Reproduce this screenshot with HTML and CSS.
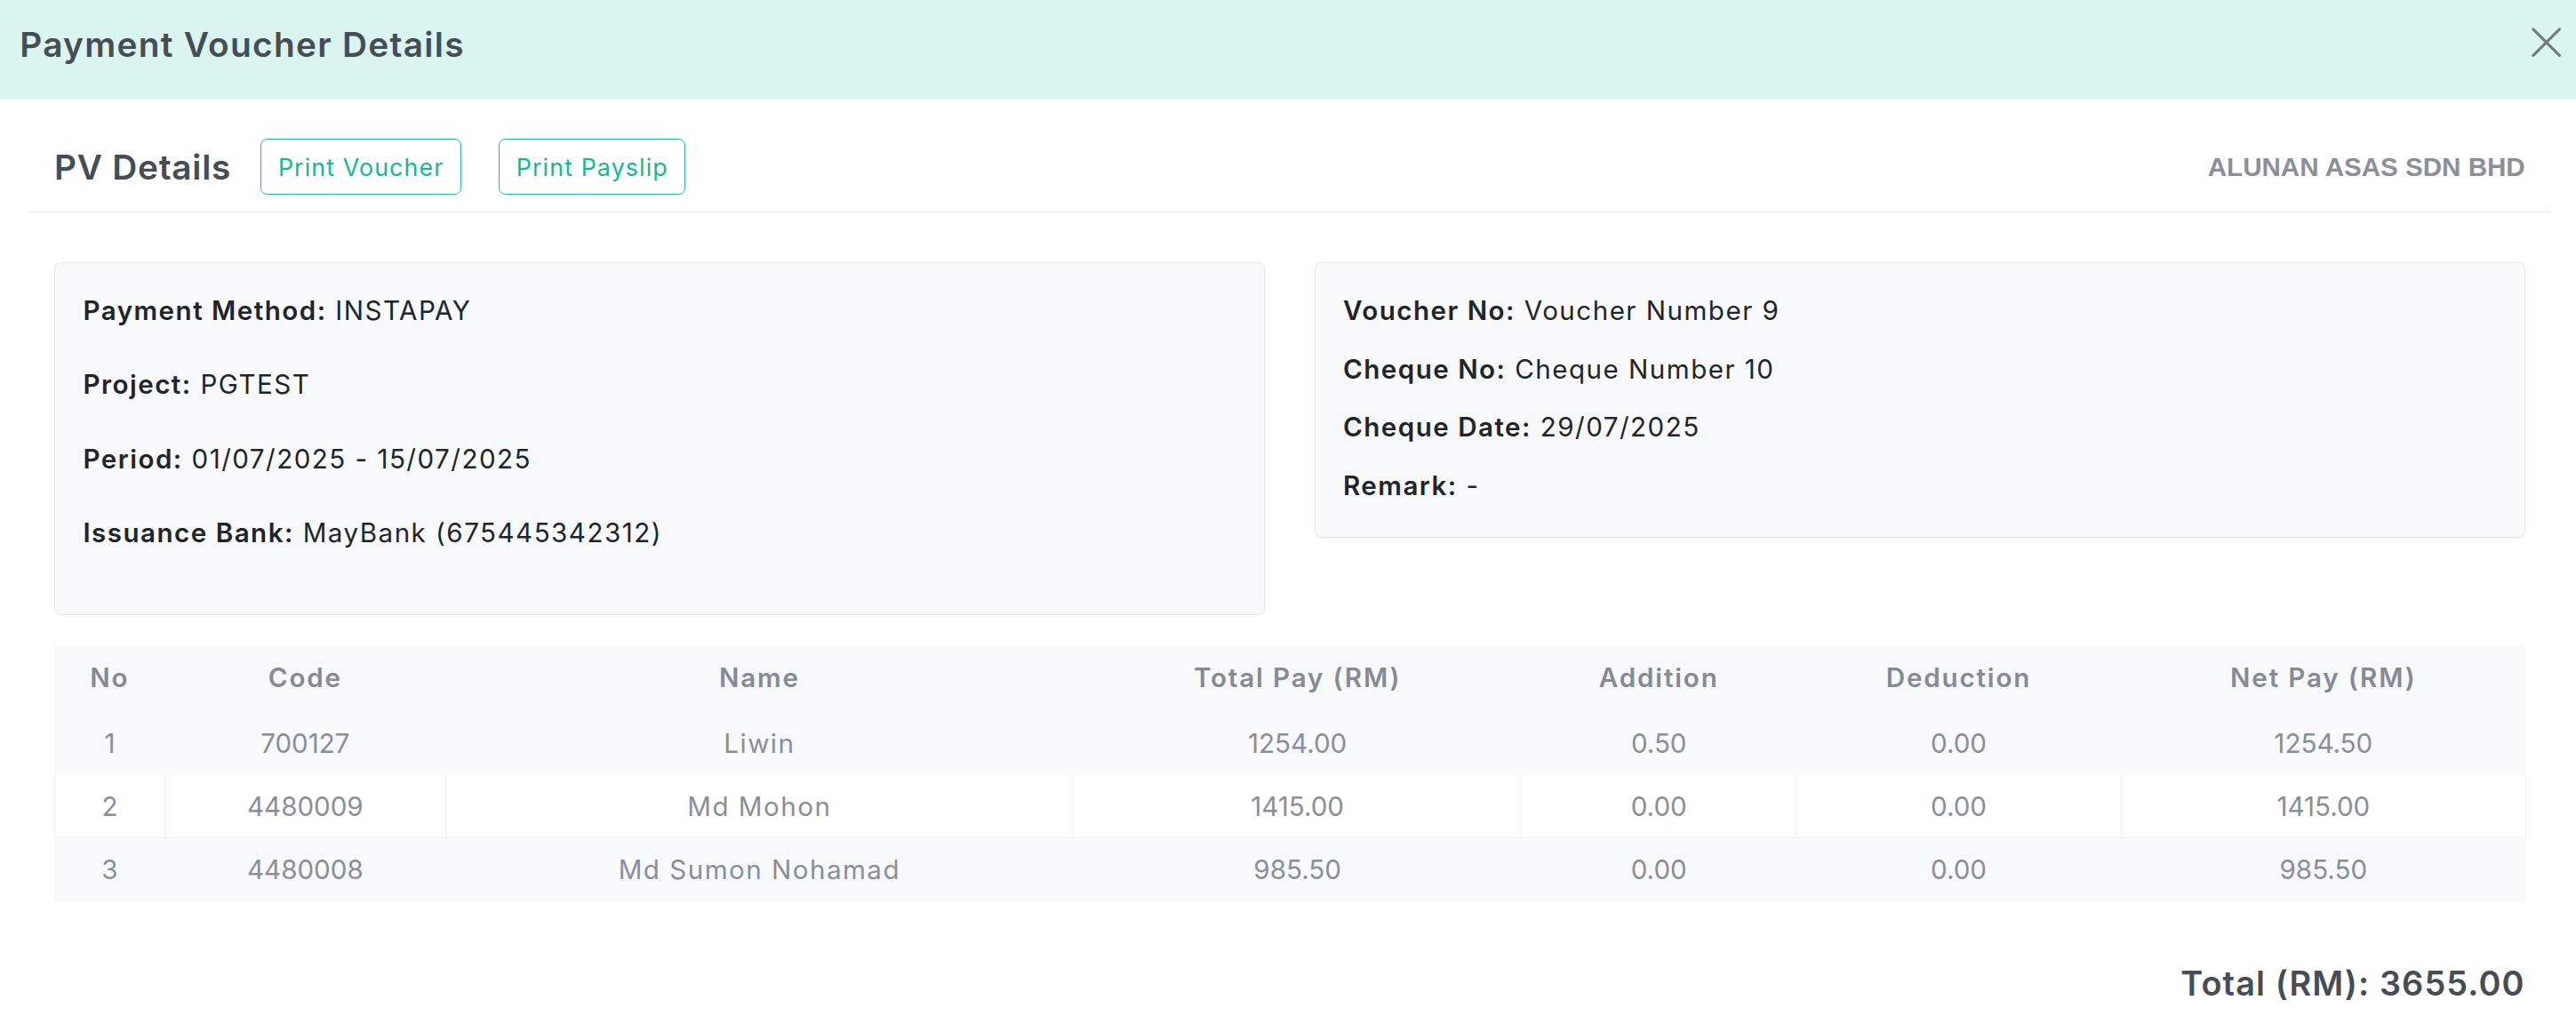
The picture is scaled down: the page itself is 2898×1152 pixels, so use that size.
FILE: index.html
```html
<!DOCTYPE html>
<html lang="en">
<head>
<meta charset="utf-8">
<title>Payment Voucher Details</title>
<link rel="stylesheet" href="styles.css">
</head>
<body>
<div class="app">
  <header class="modal-header">
    <h1 class="modal-title">Payment Voucher Details</h1>
    <button class="close-btn" aria-label="Close">
      <svg viewBox="0 0 18 18" width="18" height="18"><path d="M1 1 L17 17 M17 1 L1 17" stroke="#6f7c77" stroke-width="1.6" stroke-linecap="round" fill="none"/></svg>
    </button>
  </header>
  <section class="modal-body">
    <div class="pv-head">
      <div class="pv-left">
        <h2 class="pv-title">PV Details</h2>
        <button class="outline-btn">Print Voucher</button>
        <button class="outline-btn">Print Payslip</button>
      </div>
      <div class="company">ALUNAN ASAS SDN BHD</div>
    </div>
    <div class="content">
      <div class="cards">
        <div class="card card-left">
          <p class="row"><b>Payment Method:</b> INSTAPAY</p>
          <p class="row"><b>Project:</b> PGTEST</p>
          <p class="row"><b>Period:</b> 01/07/2025 - 15/07/2025</p>
          <p class="row"><b>Issuance Bank:</b> MayBank (675445342312)</p>
        </div>
        <div class="card card-right">
          <p class="row"><b>Voucher No:</b> Voucher Number 9</p>
          <p class="row"><b>Cheque No:</b> Cheque Number 10</p>
          <p class="row"><b>Cheque Date:</b> 29/07/2025</p>
          <p class="row"><b>Remark:</b> -</p>
        </div>
      </div>
      <table class="pay-table">
        <colgroup>
          <col class="c-no"><col class="c-code"><col class="c-name"><col class="c-total"><col class="c-add"><col class="c-ded"><col class="c-net">
        </colgroup>
        <thead>
          <tr><th>No</th><th>Code</th><th>Name</th><th>Total Pay (RM)</th><th>Addition</th><th>Deduction</th><th>Net Pay (RM)</th></tr>
        </thead>
        <tbody>
          <tr><td>1</td><td>700127</td><td class="name">Liwin</td><td>1254.00</td><td>0.50</td><td>0.00</td><td>1254.50</td></tr>
          <tr><td>2</td><td>4480009</td><td class="name">Md Mohon</td><td>1415.00</td><td>0.00</td><td>0.00</td><td>1415.00</td></tr>
          <tr><td>3</td><td>4480008</td><td class="name">Md Sumon Nohamad</td><td>985.50</td><td>0.00</td><td>0.00</td><td>985.50</td></tr>
        </tbody>
      </table>
      <div class="total">Total (RM): 3655.00</div>
    </div>
  </section>
</div>
</body>
</html>
```
FILE: styles.css
```css
html, body {
  margin: 0;
  padding: 0;
  background: #ffffff;
}
.app {
  zoom: 1.8482;
  width: 1568px;
  font-family: "Inter", "Noto Sans", "Liberation Sans", sans-serif;
  color: #212529;
}
.modal-header {
  height: 60px;
  background: #daf5ef;
  display: flex;
  align-items: center;
  justify-content: space-between;
  padding: 0 9px 0 12px;
  box-sizing: border-box;
}
.modal-title {
  margin: 0;
  font-size: 21px;
  font-weight: 600;
  color: #474d55;
  letter-spacing: 0.7px;
  position: relative;
  top: -3px;
}
.close-btn {
  border: 0;
  background: transparent;
  padding: 0;
  width: 18px;
  height: 18px;
  display: flex;
  position: relative;
  top: -4px;
}
.modal-body {
  padding-top: 24px;
}
.pv-head {
  margin: 0 16px 0 18px;
  padding: 0 15px 10px 15px;
  border-bottom: 1px solid #e3e3e8;
  display: flex;
  align-items: center;
  justify-content: space-between;
  height: 35px;
}
.pv-left {
  display: flex;
  align-items: center;
}
.pv-title {
  margin: 0 18px 0 0;
  font-size: 21px;
  font-weight: 600;
  letter-spacing: 0.4px;
  color: #474d55;
}
.outline-btn {
  font-family: inherit;
  height: 34px;
  padding: 0 10px;
  border: 1px solid #1bbb9b;
  border-radius: 4px;
  background: #fff;
  color: #13b894;
  font-size: 14.5px;
  letter-spacing: 0.6px;
  font-weight: 400;
  margin-right: 23px;
}
.company {
  font-family: "Liberation Sans", Arial, sans-serif;
  font-weight: 700;
  font-size: 16px;
  color: #8b8f9b;
}
.content {
  padding: 30px 31px 0 33px;
}
.cards {
  display: flex;
  gap: 30px;
  align-items: flex-start;
}
.card {
  flex: 1;
  background: #f8f9fb;
  border: 1px solid #e2e4e8;
  border-radius: 4px;
  padding: 17px 17px;
  box-sizing: border-box;
  font-size: 16px;
  letter-spacing: 0.8px;
}
.row {
  margin: 0;
  line-height: 24px;
  color: #212529;
}
.row b {
  font-weight: 600;
}
.card-left .row {
  margin-bottom: 21px;
}
.card-right {
  padding-bottom: 19px;
}
.card-right .row + .row {
  margin-top: 11.5px;
}
.pay-table {
  margin-top: 18px;
  width: 100%;
  border-collapse: collapse;
  table-layout: fixed;
  font-size: 16px;
  color: #8a8e9b;
}
.c-no { width: 67px; }
.c-code { width: 171px; }
.c-name { width: 382px; }
.c-total { width: 273px; }
.c-add { width: 167px; }
.c-ded { width: 198px; }
.c-net { width: 246px; }
.pay-table th {
  height: 40px;
  background: #f8f9fa;
  font-weight: 600;
  letter-spacing: 1px;
  color: #868a97;
  text-align: center;
  padding: 0;
}
.pay-table td {
  height: 38px;
  text-align: center;
  padding: 0;
  font-weight: 400;
  border: 1px solid #f1f2f4;
}
.pay-table td.name {
  letter-spacing: 0.8px;
}
.pay-table tbody tr:nth-child(odd) td {
  background: #f8f9fa;
  border-color: #f8f9fa;
}
.pay-table tbody tr:first-child td {
  border-top-color: #f8f9fa;
}
.total {
  margin-top: 35px;
  text-align: right;
  font-size: 20.5px;
  font-weight: 600;
  letter-spacing: 0.6px;
  color: #474d55;
  line-height: 30px;
}
```
